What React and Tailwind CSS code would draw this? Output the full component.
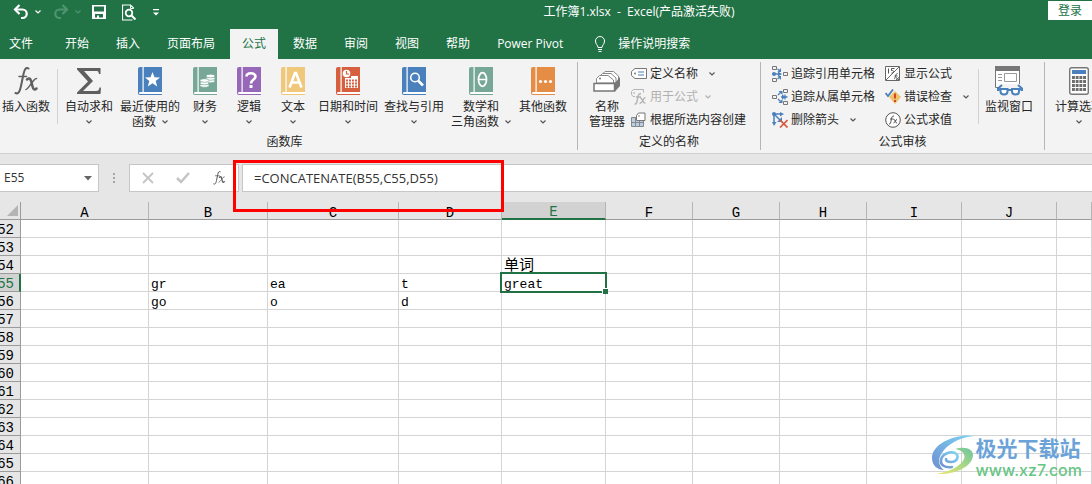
import clsx from "clsx";

const UI_FONT = "font-['Open_Sans','Noto_Sans_CJK_SC',sans-serif]";
const CELL_FONT = "font-['Liberation_Mono','Noto_Sans_CJK_SC',monospace]";

const TABS = [
  "开始",
  "插入",
  "页面布局",
  "公式",
  "数据",
  "审阅",
  "视图",
  "帮助",
  "Power Pivot",
];

const COLUMNS = [
  { name: "A", width: "w-[128px]" },
  { name: "B", width: "w-[119px]" },
  { name: "C", width: "w-[131px]" },
  { name: "D", width: "w-[103px]" },
  { name: "E", width: "w-[104px]" },
  { name: "F", width: "w-[87px]" },
  { name: "G", width: "w-[87px]" },
  { name: "H", width: "w-[87px]" },
  { name: "I", width: "w-[95px]" },
  { name: "J", width: "w-[95px]" },
  { name: "", width: "" },
];

const ROWS = [52, 53, 54, 55, 56, 57, 58, 59, 60, 61, 62, 63, 64, 65, 66];

const CELLS = {
  E54: "单词",
  B55: "gr",
  C55: "ea",
  D55: "t",
  E55: "great",
  B56: "go",
  C56: "o",
  D56: "d",
};

const Chevron = ({ className }) => (
  <svg
    width="6"
    height="4"
    viewBox="0 0 6 4"
    fill="none"
    stroke="currentColor"
    strokeWidth="1.2"
    className={clsx("shrink-0", className)}
  >
    <path d="M0.5 0.5 3 3 5.5 0.5" />
  </svg>
);

/* Title bar icons */

const UndoIcon = ({ className }) => (
  <svg
    width="16"
    height="16"
    viewBox="0 0 16 16"
    fill="none"
    stroke="currentColor"
    strokeWidth="2.2"
    className={className}
  >
    <path d="M2 5.500h7.500a4 4 0 0 1 0 8.500H8" />
    <path d="M6.500 1 2 5.500l4.500 4.500" />
  </svg>
);

const SaveIcon = () => (
  <svg width="14" height="14" viewBox="0 0 14 14">
    <path
      fill="#fff"
      fillRule="evenodd"
      d="M0 0h14v14H0zM2 1.500v5h10v-5zM3 9v3.500h2V10.500h2v2h4V9z"
    />
  </svg>
);

const PreviewIcon = () => (
  <svg width="15" height="17" viewBox="0 0 15 17" fill="none" stroke="#fff">
    <path d="M11.500 4.500V4L8.500 1H.5v15h10" strokeWidth="1.2" />
    <path d="M8.500 1v3.500h3" />
    <circle cx="7" cy="9" r="3.300" strokeWidth="1.800" />
    <path d="m9.500 11.500 4 4" strokeWidth="2" />
  </svg>
);

const BulbIcon = () => (
  <svg width="12" height="16" viewBox="0 0 12 16" fill="none" stroke="#fff">
    <path d="M4 11.500C4 9 1.500 8.500 1.500 5a4.500 4.500 0 0 1 9 0C10.500 8.500 8 9 8 11.500z" />
    <path d="M4 13.500h4M4.500 15.500h3" />
  </svg>
);

/* Ribbon icons */

const Book = ({ color, children }) => (
  <svg width="24" height="28" viewBox="0 0 24 28">
    <path fill={color} d="M2 0h22v28H2a2 2 0 0 1-2-2V2a2 2 0 0 1 2-2z" />
    <path fill="#fff" d="M4.500 0h1.200v25H4.500z" />
    <path fill="#fff" d="M2 25h22v2H2a1 1 0 0 1 0-2z" />
    {children}
  </svg>
);

const SigmaIcon = () => (
  <svg width="24" height="28" viewBox="0 0 24 28">
    <path
      fill="#5f5f5f"
      d="M0 1h23.500v6h-1.500c-.5-2.500-1-3-3-3H7l9 10L6 24h13c2.500 0 3-1 3.500-3.500H24L23.500 27H0v-1.500L11 14.500 0 2.500z"
    />
  </svg>
);

const FxIcon = ({ size, color }) => (
  <svg width={size} height={size} viewBox="0 0 24 28">
    <g fill="none" stroke={color} strokeWidth="2" strokeLinecap="round">
      <path d="M1.500 26c3 1.500 4.500-2 5.500-7L9.500 7c1-5 2.500-7 5-5.500" />
      <path d="M5 9.500h7.500" strokeWidth="1.500" />
      <path d="M13 12.500c3-2.500 4 0 4.800 4s1.700 8 4.700 5" strokeWidth="2.500" />
      <path d="M22.500 11.500c-3-.5-8 11-10.500 11" strokeWidth="1.500" />
    </g>
  </svg>
);

const NameManagerIcon = () => (
  <svg width="28" height="28" viewBox="0 0 28 28">
    <g fill="#fff" stroke="#888">
      <path d="M9 14V7.500L12 4.500h8.500l5 4.500v6z" />
      <path d="M6.500 14V9.500l3-3H18l5 4.500v5z" />
      <path d="M3.500 16v-4.500l3-3H15l5.500 4.500v3z" />
    </g>
    <circle cx="7" cy="11.500" r="1" fill="#777" />
    <path fill="#777" d="m22 16 5-6v9l-5 5.500z" />
    <path fill="#fff" stroke="#777" strokeWidth="1.500" d="M1 16.500h20.500V24H1z" />
  </svg>
);

const WatchIcon = () => (
  <svg width="28" height="30" viewBox="0 0 28 30">
    <path fill="#fff" stroke="#777" d="M.5.5h24v21H.5z" />
    <path fill="#777" d="M0 0h25v5H0z" />
    <path stroke="#999" d="M3 8.500h4M3 11.500h4M3 14.500h4" />
    <path fill="none" stroke="#999" d="M9.500 7.500h12v8h-12z" />
    <path fill="#f3f3f3" d="M4 18h24v12H4z" />
    <g fill="#fff" stroke="#4a80bb" strokeWidth="2">
      <path d="M5.500 23h7v2.500c0 4-7 4-7 0zM17 23h7v2.500c0 4-7 4-7 0z" />
      <path fill="none" d="M3 25v-2.500L7 19M27 25v-2.500L23 19M12.500 24H17M2.500 23.500h3M24 23.500h3" />
    </g>
  </svg>
);

const CalculatorIcon = () => (
  <svg width="20" height="28" viewBox="0 0 20 28">
    <rect x=".7" y=".7" width="18.600" height="26.600" rx="2" fill="#fff" stroke="#777" strokeWidth="1.400" />
    <path fill="#4a80bb" d="M3 3h14v4H3z" />
    <path
      stroke="#6d6d6d"
      strokeWidth="3"
      strokeDasharray="2.900 .8"
      d="M3 10.500h14M3 14.500h14M3 18.500h14M3 22.500h14"
    />
  </svg>
);

const DefineNameIcon = () => (
  <svg width="16" height="16" viewBox="0 0 16 16" fill="none">
    <path fill="#fff" stroke="#777" d="M4 2.500h11.500v10H4L.5 9.500v-4z" />
    <circle cx="4" cy="7.500" r="1" fill="#777" />
    <path stroke="#4a80bb" strokeWidth="1.200" d="M7 6h6M7 9h6" />
  </svg>
);

const UseInFormulaIcon = () => (
  <svg width="16" height="16" viewBox="0 0 16 16" fill="none" stroke="#b4b4b4">
    <path d="M4 7.500H2L.5 5.500v-3l2-2h10v3" />
    <circle cx="3" cy="4" r=".5" />
    <path strokeWidth="1.500" d="M3.500 15c2 .5 2.500-2 3-5s1-6 3.500-5M5 8h5" />
    <path strokeWidth="1.400" d="M9 9c3-1 2 6 5.500 5M14.500 8.500C12 8.500 11.500 15 8.500 14.500" />
  </svg>
);

const FromSelectionIcon = () => (
  <svg width="16" height="16" viewBox="0 0 16 16">
    <path fill="#b9cfe6" stroke="#888" d="M.5 5.500h12v9H.5zM.5 10.500h12M4.500 5.500v9M8.500 5.500v9" />
    <path fill="#fff" stroke="#777" d="M5.500 8.500V3.500L7.500 1H14v7.500z" />
    <circle cx="8" cy="4" r=".8" fill="#777" />
  </svg>
);

const PrecedentsIcon = () => (
  <svg width="16" height="16" viewBox="0 0 16 16" fill="none">
    <path stroke="#777" d="M.5.5h4v3h-4zM.5 12.500h4v3h-4zM11.500 6.500h4v3h-4z" />
    <circle cx="2" cy="8" r="2" fill="#4a80bb" />
    <path stroke="#4a80bb" strokeWidth="1.300" d="M2 8h5M5.500 3 8 5M5.500 13 8 11" />
    <path fill="#4a80bb" d="m6 5.500 4 2.500-4 2.500zM9 2v4H5.500zM9 14v-4H5.500z" />
  </svg>
);

const DependentsIcon = () => (
  <svg width="16" height="16" viewBox="0 0 16 16" fill="none">
    <path stroke="#777" d="M.5 6.500h4v3h-4zM11.500.5h4v3h-4zM11.500 12.500h4v3h-4z" />
    <path stroke="#4a80bb" strokeWidth="1.300" d="M9 8h6.500M13 5.500v5M6 6l3-3M6 10l3 3" />
    <path fill="#4a80bb" d="M6.500 2h4v4zM6.500 14h4v-4zM10 5.500 14 8l-4 2.500z" />
  </svg>
);

const RemoveArrowsIcon = () => (
  <svg width="16" height="16" viewBox="0 0 16 16" fill="none">
    <path stroke="#4a80bb" strokeWidth="1.500" d="M2 2h8M2 2v10M2 2l8 8" />
    <path fill="#4a80bb" d="M8 0l4 2-4 2.500zM0 10h4.500L2 14zM10 5v5H5z" />
    <circle cx="2" cy="2" r="2" fill="#4a80bb" />
    <path stroke="#d65a3f" strokeWidth="1.700" d="m8 8 7.500 7.500M15.500 8 8 15.500" />
  </svg>
);

const ShowFormulasIcon = () => (
  <svg width="16" height="16" viewBox="0 0 16 16" fill="none">
    <path fill="#fff" stroke="#666" d="M.5.500h14v14H.5z" />
    <path stroke="#666" d="M14 1 1 14" />
    <path stroke="#555" d="M3.500 2.500v5M9.500 2.500H6.500v2c3-.5 3 2.500 0 2.500M9 13c1.500 0 1.500-6 3.500-5.500M9.500 10h3M11 11.500l3 2.500M14 11.500 11 14" />
  </svg>
);

const ErrorCheckIcon = () => (
  <svg width="16" height="16" viewBox="0 0 16 16" fill="none">
    <path fill="#efc26b" d="m10 2 6 6-6 7-6-7z" />
    <path stroke="#d24726" strokeWidth="2" d="M10 4.500v5M10 11v2" />
    <path stroke="#4a80bb" strokeWidth="1.800" d="m.5 4 2.500 3L8 .5" />
  </svg>
);

const EvaluateIcon = () => (
  <svg width="16" height="16" viewBox="0 0 16 16" fill="none" stroke="#555">
    <circle cx="8" cy="8" r="7.300" fill="#fff" />
    <path d="M4 12c1.500.3 1.800-1.500 2.200-4s1-4.500 2.800-4M5 7h3.500M8.500 7.500c2-.8 1.500 4 3.500 3.500M12 7.500c-1.500-.2-2 3.500-3.500 3.500" />
  </svg>
);

const LIBRARY = [
  { label: "自动求和", width: "w-14", icon: <SigmaIcon /> },
  {
    label: "最近使用的",
    second: "函数",
    width: "w-[66px]",
    icon: (
      <Book color="#4a80bb">
        <path fill="#fff" d="m14.500 5 2 5.200 5.500.3-4.300 3.500 1.500 5.500-4.700-3.200-4.700 3.200 1.500-5.500L7 10.500l5.500-.3z" />
      </Book>
    ),
  },
  {
    label: "财务",
    width: "w-11",
    icon: (
      <Book color="#76a797">
        <g fill="#fff" stroke="#76a797" strokeWidth=".7">
          <ellipse cx="17.500" cy="14" rx="4.500" ry="1.800" />
          <ellipse cx="17.500" cy="11.500" rx="4.500" ry="1.800" />
          <ellipse cx="17.500" cy="9" rx="4.500" ry="1.800" />
          <ellipse cx="11.500" cy="18.500" rx="4.500" ry="1.800" />
          <ellipse cx="11.500" cy="16" rx="4.500" ry="1.800" />
          <ellipse cx="11.500" cy="13.500" rx="4.500" ry="1.800" />
        </g>
      </Book>
    ),
  },
  {
    label: "逻辑",
    width: "w-11",
    icon: (
      <Book color="#9668b7">
        <path fill="none" stroke="#fff" strokeWidth="2.600" d="M9.500 9.500c0-4 9-4.500 9 0 0 3-4.500 3-4.500 7" />
        <path fill="#fff" d="M12.500 18h3v3h-3z" />
      </Book>
    ),
  },
  {
    label: "文本",
    width: "w-11",
    icon: (
      <Book color="#efc87c">
        <path fill="none" stroke="#fff" strokeWidth="2.600" d="M8.500 20.500 14 6h1l5.500 14.500M10.500 15.500h8" />
      </Book>
    ),
  },
  {
    label: "日期和时间",
    width: "w-[66px]",
    icon: (
      <Book color="#d65f40">
        <circle cx="10.500" cy="6.500" r="3.800" fill="#fff" />
        <path fill="none" stroke="#d65f40" strokeWidth="1.200" d="M10.500 4v3h2.500" />
        <path fill="#fff" d="M9 11h13v10H9zM15 9h7v2h-7z" />
        <path fill="none" stroke="#d65f40" d="M10 13.500h11M10 16.500h11M10 19.500h11" strokeWidth="1.800" strokeDasharray="2 1" />
      </Book>
    ),
  },
  {
    label: "查找与引用",
    width: "w-[66px]",
    icon: (
      <Book color="#4a80bb">
        <circle cx="13" cy="10.500" r="4.300" fill="none" stroke="#fff" strokeWidth="1.600" />
        <path stroke="#fff" strokeWidth="2.500" d="m16 13.500 5 5" />
      </Book>
    ),
  },
  {
    label: "数学和",
    second: "三角函数",
    width: "w-[68px]",
    icon: (
      <Book color="#76a797">
        <ellipse cx="13.500" cy="12.500" rx="4" ry="6.800" fill="none" stroke="#fff" strokeWidth="1.800" />
        <path stroke="#fff" strokeWidth="1.500" d="M9.500 12.500h8" />
      </Book>
    ),
  },
  {
    label: "其他函数",
    width: "w-14",
    icon: (
      <Book color="#e58d45">
        <g fill="#fff">
          <circle cx="9.500" cy="14.500" r="1.600" />
          <circle cx="14.500" cy="14.500" r="1.600" />
          <circle cx="19.500" cy="14.500" r="1.600" />
        </g>
      </Book>
    ),
  },
];

const BigButton = ({ icon, label, second, width, menu }) => (
  <button
    className={clsx(
      "flex shrink-0 flex-col items-center pt-1 text-xs leading-[15px] whitespace-nowrap",
      width
    )}
  >
    <span className="mb-[3px] flex h-[30px] items-center">{icon}</span>
    <span>{label}</span>
    <span className="flex h-[15px] items-center gap-1.5">
      {second}
      {menu && <Chevron className="text-[#555]" />}
    </span>
  </button>
);

const SmallButton = ({ icon, label, menu, disabled }) => (
  <button
    disabled={disabled}
    className="flex h-[23px] items-center gap-[3px] text-xs whitespace-nowrap disabled:text-[#b1b1b1]"
  >
    {icon}
    <span>{label}</span>
    {menu && <Chevron className={menu} />}
  </button>
);

const Group = ({ label, className, labelClass, children }) => (
  <section className="flex shrink-0 flex-col border-r border-[#b5b5b5] text-center">
    <div className={clsx("flex h-[72px] shrink-0", className)}>{children}</div>
    <h2 className={clsx("text-xs leading-4", labelClass)}>{label}</h2>
  </section>
);

const Divider = () => <div className="mt-[7px] h-[55px] w-px shrink-0 bg-[#d2d2d2]" />;

const TitleBar = () => (
  <header className="grid h-[29px] grid-cols-[230px_1fr_auto] items-start">
    <div className="flex h-6 items-center pl-[13px]">
      <button aria-label="撤消">
        <UndoIcon />
      </button>
      <Chevron className="ml-1.5" />
      <button aria-label="恢复" disabled className="ml-3 text-[#4f9470]">
        <UndoIcon className="-scale-x-100" />
      </button>
      <Chevron className="ml-1.5 text-[#4f9470]" />
      <button aria-label="保存" className="ml-[11px]">
        <SaveIcon />
      </button>
      <button aria-label="打印预览" className="ml-4">
        <PreviewIcon />
      </button>
      <button aria-label="自定义快速访问工具栏" className="ml-4">
        <svg width="6" height="7" viewBox="0 0 6 7" fill="#fff">
          <path d="M0 0h6v1.200H0zM0 3.500h6l-3 3z" />
        </svg>
      </button>
    </div>
    <h1 className="text-center text-xs leading-6 whitespace-pre">
      工作簿1.xlsx{"  -  "}Excel(产品激活失败)
    </h1>
    <button className="mt-px h-[19px] w-11 bg-white text-xs leading-[19px] text-[#217346]">
      登录
    </button>
  </header>
);

const TabBar = () => (
  <nav className="flex h-[30px] items-stretch gap-[3px] text-xs whitespace-nowrap">
    <button className="w-[50px] pl-[9px] text-left">文件</button>
    {TABS.map((tab) => (
      <button
        key={tab}
        className={clsx("px-3", tab === "公式" && "bg-[#f3f3f3] text-[#217346]")}
      >
        {tab}
      </button>
    ))}
    <button className="ml-3 flex items-center gap-3 px-1">
      <BulbIcon />
      操作说明搜索
    </button>
  </nav>
);

const Ribbon = () => (
  <div className="flex h-[95px] shrink-0 overflow-hidden border-b border-[#d0d0d0] bg-[#f3f3f3] py-[3px] text-[#262626]">
    <Group label="函数库" className="pr-1.5" labelClass="pr-2">
      <BigButton icon={<FxIcon size={28} color="#5f5f5f" />} label="插入函数" width="w-[52px]" />
      <div className="w-[5px]" />
      <Divider />
      <div className="w-[3px]" />
      {LIBRARY.map((item) => (
        <BigButton key={item.label} {...item} menu />
      ))}
    </Group>

    <Group label="定义的名称" className="pr-3.5 pl-[9px]">
      <BigButton icon={<NameManagerIcon />} label="名称" second="管理器" width="w-10" />
      <div className="ml-1">
        <SmallButton icon={<DefineNameIcon />} label="定义名称" menu="ml-2 text-[#555]" />
        <SmallButton icon={<UseInFormulaIcon />} label="用于公式" menu="ml-1 text-[#b1b1b1]" disabled />
        <SmallButton icon={<FromSelectionIcon />} label="根据所选内容创建" />
      </div>
    </Group>

    <Group label="公式审核" className="pr-[5px] pl-[11px]">
      <div>
        <SmallButton icon={<PrecedentsIcon />} label="追踪引用单元格" />
        <SmallButton icon={<DependentsIcon />} label="追踪从属单元格" />
        <SmallButton icon={<RemoveArrowsIcon />} label="删除箭头" menu="ml-2 text-[#555]" />
      </div>
      <div className="mr-[9px] ml-2.5">
        <SmallButton icon={<ShowFormulasIcon />} label="显示公式" />
        <SmallButton icon={<ErrorCheckIcon />} label="错误检查" menu="ml-2 text-[#555]" />
        <SmallButton icon={<EvaluateIcon />} label="公式求值" />
      </div>
      <Divider />
      <BigButton icon={<WatchIcon />} label="监视窗口" width="w-[60px]" />
    </Group>

    <section className="pl-1.5">
      <BigButton icon={<CalculatorIcon />} label="计算选项" width="w-14" menu />
    </section>
  </div>
);

const FormulaBar = () => (
  <div className="relative flex h-12 shrink-0 items-start pt-2.5 text-[#333]">
    <div className="flex h-7 w-[99px] items-center border border-l-0 border-[#c6c6c6] bg-white">
      <input
        aria-label="名称框"
        defaultValue="E55"
        className="w-20 pl-1 text-xs outline-none"
      />
      <svg width="8" height="5" viewBox="0 0 8 5" className="ml-1" fill="#666">
        <path d="M0 0h8L4 4.500z" />
      </svg>
    </div>
    <svg width="30" height="28" viewBox="0 0 30 28" fill="#a5a5a5">
      <path d="M14 9h2v2h-2zM14 13h2v2h-2zM14 17h2v2h-2z" />
    </svg>
    <div className="flex h-7 w-[110px] items-center justify-between border border-[#c6c6c6] bg-white px-3">
      <button aria-label="取消">
        <svg width="12" height="12" viewBox="0 0 12 12" stroke="#c4c4c4" strokeWidth="1.800">
          <path d="m1 1 10 10M11 1 1 11" />
        </svg>
      </button>
      <button aria-label="输入">
        <svg width="14" height="12" viewBox="0 0 14 12" fill="none" stroke="#c4c4c4" strokeWidth="2.500">
          <path d="m1 6 4 4 8-9" />
        </svg>
      </button>
      <button aria-label="插入函数">
        <FxIcon size={14} color="#555" />
      </button>
    </div>
    <input
      aria-label="编辑栏"
      defaultValue="=CONCATENATE(B55,C55,D55)"
      className="ml-[3px] h-7 min-w-0 flex-1 border border-r-0 border-[#c6c6c6] bg-white px-[11px] text-[13px] outline-none"
    />
    {/* red highlight around the formula */}
    <div className="pointer-events-none absolute top-1.5 left-[233px] z-10 h-[52px] w-[271px] border-3 border-[#ff0000]" />
  </div>
);

const Sheet = () => (
  <table
    className={clsx(
      "w-full table-fixed border-separate border-spacing-0 text-[13px] text-black",
      CELL_FONT
    )}
  >
    <colgroup>
      <col className="w-[21px]" />
      {COLUMNS.map((col) => (
        <col key={col.name} className={col.width} />
      ))}
    </colgroup>
    <thead>
      <tr className="h-[18px] text-sm leading-5">
        <th className="border-r border-b border-[#9b9b9b] bg-[#e6e6e6] p-0">
          <svg width="11" height="11" viewBox="0 0 11 11" fill="#b4b4b4" className="ml-[7px]">
            <path d="M11 0v11H0z" />
          </svg>
        </th>
        {COLUMNS.map((col) => (
          <th
            key={col.name}
            className={clsx(
              "border-r border-r-[#b5b5b5] p-0 font-normal",
              col.name === "E"
                ? "border-b-2 border-b-[#217346] bg-[#d2d2d2] text-[#217346]"
                : "border-b border-b-[#9b9b9b] bg-[#e6e6e6]"
            )}
          >
            <div className="h-4">{col.name}</div>
          </th>
        ))}
      </tr>
    </thead>
    <tbody>
      {ROWS.map((row) => (
        <tr key={row} className="h-[18px]">
          <th
            className={clsx(
              "border-b border-b-[#9b9b9b] p-0 font-normal",
              row === 55
                ? "border-r-2 border-r-[#217346] bg-[#d2d2d2] text-[#217346]"
                : "border-r border-r-[#9b9b9b] bg-[#e6e6e6]"
            )}
          >
            <div className="flex h-[17px] w-[14px] justify-end text-sm leading-5">
              {row}
            </div>
          </th>
          {COLUMNS.map((col) => {
            const id = `${col.name}${row}`;
            return (
              <td
                key={id}
                className={clsx(
                  "relative border-r border-b border-[#d4d4d4] bg-white p-0",
                  id === "E55" && "z-10"
                )}
              >
                <div
                  className={clsx(
                    "h-[17px] pl-[2px] leading-[22px]",
                    id === "E54" && "text-[15px]"
                  )}
                >
                  {CELLS[id]}
                </div>
                {id === "E55" && (
                  <div className="absolute -inset-0.5 border-2 border-[#217346]">
                    <i className="absolute -right-[3px] -bottom-[3px] size-1.5 border-t border-l border-white bg-[#217346]" />
                  </div>
                )}
              </td>
            );
          })}
        </tr>
      ))}
    </tbody>
  </table>
);

const Watermark = () => (
  <div className="absolute right-2.5 bottom-1 z-10 flex items-center">
    <svg width="44" height="42" viewBox="0 0 44 42" className="mb-1">
      <defs>
        <linearGradient id="blue" x1="0" y1="1" x2="1" y2="0">
          <stop offset="0" stopColor="#6f8fd0" />
          <stop offset="1" stopColor="#7cd6f4" />
        </linearGradient>
        <linearGradient id="green" x1="0" y1="1" x2="1" y2="0">
          <stop offset="0" stopColor="#f0ea6a" />
          <stop offset="1" stopColor="#6cc5a0" />
        </linearGradient>
      </defs>
      <path
        fill="url(#green)"
        d="M23 15c10-3 18 0 18 6 0 10-15 20-37 19 13-2 25-8 28-15 2-5-2-9-9-10z"
      />
      <path
        fill="url(#blue)"
        d="M43 2C25-1 0 9 0 24c0 8 6 12 12 12-6-4-7-12 0-20C20 7 31 3 43 2z"
      />
      <path
        fill="none"
        stroke="url(#blue)"
        strokeWidth="2.600"
        strokeLinecap="round"
        d="M20 33c-7 1-12-2-11-7 1-6 9-9 14-7 5 3 2 9-4 9-3 0-5-1-5-3"
      />
    </svg>
    <div className="flex flex-col">
      <span className="font-['Noto_Sans_CJK_SC',sans-serif] text-[21px] leading-[26px] font-bold text-[#6ba3d9]">
        极光下载站
      </span>
      <a
        href="#"
        className="font-['Inter',sans-serif] text-base leading-5 font-medium text-[#67c584]"
      >
        www.xz7.com
      </a>
    </div>
  </div>
);

export default function App() {
  return (
    <div
      className={clsx(
        "relative flex h-screen flex-col overflow-hidden bg-[#e6e6e6]",
        UI_FONT
      )}
    >
      <div className="shrink-0 bg-[#217346] text-white">
        <TitleBar />
        <TabBar />
      </div>
      <Ribbon />
      <FormulaBar />
      <main className="min-h-0 flex-1 overflow-hidden">
        <Sheet />
      </main>
      <Watermark />
    </div>
  );
}
